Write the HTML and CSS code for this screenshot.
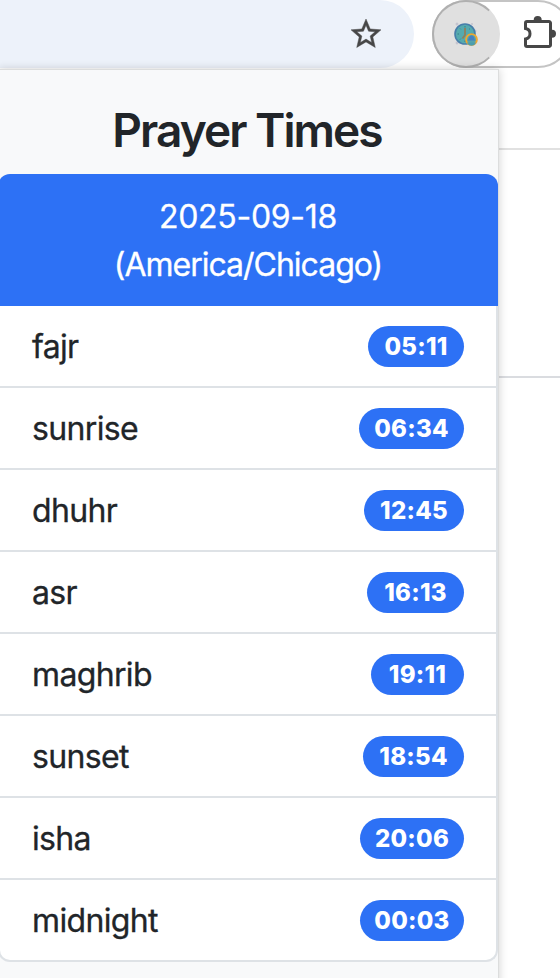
FILE: index.html
```html
<!DOCTYPE html>
<html lang="en">
<head>
<meta charset="utf-8">
<title>Prayer Times</title>
<link rel="stylesheet" href="styles.css">
</head>
<body>
<div class="toolbar">
  <div class="address-bar">
    <svg class="star" viewBox="0 0 24 24"><path fill="#474747" stroke="#474747" stroke-width=".3" d="M22 9.24l-7.19-.62L12 2 9.19 8.63 2 9.24l5.46 4.73L5.82 21 12 17.27 18.18 21l-1.63-7.03L22 9.24zM12 15.4l-3.76 2.27 1-4.28-3.32-2.88 4.38-.38L12 6.1l1.71 4.04 4.38.38-3.32 2.88 1 4.28L12 15.4z"/></svg>
  </div>
  <div class="extensions">
    <div class="active-extension">
      <svg class="clock" viewBox="0 0 26 26">
        <g fill="#c4c4cf"><circle cx="4" cy="3" r="1.5"/><circle cx="22" cy="10" r="1.5"/><circle cx="4" cy="22" r="1.4"/><circle cx="19" cy="3" r="1"/></g>
        <circle cx="12" cy="13" r="10" fill="#55aaaf" stroke="#467eaa" stroke-width="1.6"/>
        <path d="M12 5v1.5M4.5 13H6M18 13h1.5M12 19.500v1.500M7 7.500l.8.8M17 7.500l-.8.8M7 18.500l.8-.8" stroke="#337e88" fill="none"/>
        <path d="M12 7v7l-2.500 3.500" stroke="#91805c" stroke-width="1.800" fill="none"/>
        <circle cx="18.500" cy="18.500" r="5.400" fill="#54a4ad" stroke="#f0a72f" stroke-width="1.900"/>
        <path d="M14.500 19.500c1.500-.8 1-5 4-5s2.500 4.200 4 5z" fill="#477fc0"/>
        <path d="M14 21.500h9c-.8 2.300-2.700 3.300-4.500 3.300s-3.700-1-4.500-3.300z" fill="#4b9eae"/>
      </svg>
    </div>
    <svg class="puzzle" viewBox="0 0 36 36"><path d="M6 5.500h22a1.500 1.500 0 0 1 1.500 1.500v22a1.500 1.500 0 0 1-1.500 1.500H6A1.500 1.500 0 0 1 4.500 29v-6c6-.8 6-9.700 0-10.500V7A1.500 1.500 0 0 1 6 5.500z" fill="none" stroke="#474747" stroke-width="3"/><path d="M12.700 5v-1a4 4 0 0 1 8 0v1zM30 13.700h1a4 4 0 0 1 0 8h-1z" fill="#474747"/></svg>
  </div>
</div>
<div class="page"><div class="page-head"></div><div class="page-section"></div></div>
<main class="popup">
  <h1>Prayer Times</h1>
  <ul class="times">
    <li class="date"><span class="day">2025-09-18</span><span class="zone">(America/Chicago)</span></li>
    <li><span>fajr</span><b class="w96">05:11</b></li>
    <li><span>sunrise</span><b class="w105">06:34</b></li>
    <li><span>dhuhr</span><b class="w100">12:45</b></li>
    <li><span>asr</span><b class="w97">16:13</b></li>
    <li><span>maghrib</span><b class="w93">19:11</b></li>
    <li><span>sunset</span><b class="w101">18:54</b></li>
    <li><span>isha</span><b class="w104">20:06</b></li>
    <li><span>midnight</span><b class="w104">00:03</b></li>
  </ul>
</main>
</body>
</html>
```
FILE: styles.css
```css
* { box-sizing: border-box; }
html { overflow: hidden; }
body { margin: 0; width: 560px; height: 978px; overflow: hidden; position: relative; background: #fff; color: #212529; font-family: Inter, "Liberation Sans", sans-serif; }
.toolbar { display: flex; height: 68px; width: 560px; overflow: hidden; }
.address-bar { flex: none; width: 414px; height: 68px; background: #edf2fa; border-radius: 0 34px 34px 0; display: flex; align-items: center; justify-content: flex-end; padding-right: 30px; }
.star { width: 36px; height: 36px; }
.extensions { flex: none; margin-left: 18px; width: 140px; height: 68px; border: 2px solid #c4c4c4; border-radius: 34px; display: flex; align-items: center; }
.active-extension { width: 68px; height: 68px; margin-left: -2px; flex: none; border-radius: 50%; background: #e0e0e0; border: 2px solid #b0b0b0; border-right-color: #e0e0e0; display: flex; align-items: center; justify-content: center; }
.clock { width: 26px; height: 26px; }
.puzzle { width: 36px; height: 36px; margin-left: 21px; flex: none; }
.page-head { height: 82px; border-bottom: 2px solid #e1e1e1; }
.page-section { height: 228px; border-bottom: 2px solid #dadce0; }
.popup { position: absolute; top: 69px; left: -2px; width: 501px; height: 930px; background: #f8f9fa; border: 1px solid #dcdddd; box-shadow: 0 0 9px rgba(0,0,0,.18); }
h1 { margin: 0; height: 104px; padding: 32px 3px 0 0; text-align: center; font-size: 46px; line-height: 56px; font-weight: 600; letter-spacing: -1.95px; }
.times { list-style: none; margin: 0 0 0 -1px; padding: 0; width: 500px; background: #fff; border: 2px solid #dee2e6; border-top: 0; border-radius: 12px; font-size: 32px; line-height: 48px; }
.times li { height: 82px; display: flex; align-items: center; justify-content: space-between; padding: 0 32px; border-bottom: 2px solid #dee2e6; }
.times li span { position: relative; top: 1px; letter-spacing: -.65px; -webkit-text-stroke: .3px currentColor; }
.times li:last-child { border-bottom: 0; height: 80px; }
.times .date { height: 132px; margin: 0 -2px; flex-direction: column; justify-content: center; background: #2d71f5; color: #fff; border: 0; border-radius: 12px 12px 0 0; }
.times .date .day { letter-spacing: -.3px; }
.times .date .zone { letter-spacing: -1px; }
.times b { height: 41px; border-radius: 21px; background: #2d71f5; color: #fff; font-size: 24px; font-weight: 800; line-height: 41px; text-align: center; letter-spacing: .25px; }
.w93 { width: 93px; }
.w96 { width: 96px; }
.w97 { width: 97px; }
.w100 { width: 100px; }
.w101 { width: 101px; }
.w104 { width: 104px; }
.w105 { width: 105px; }
```
